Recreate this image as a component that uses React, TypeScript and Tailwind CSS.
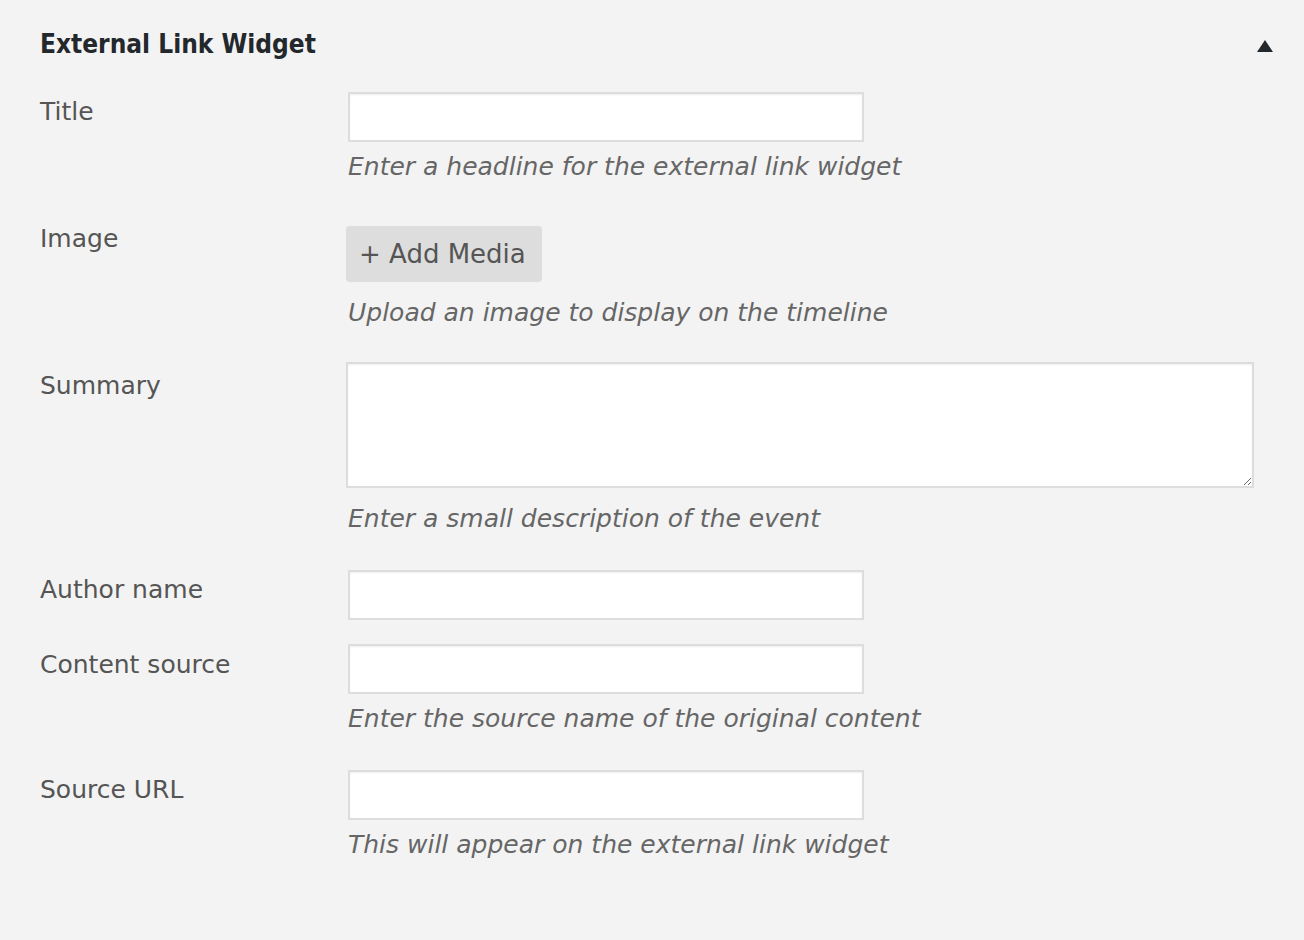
const font = { fontFamily: '"DejaVu Sans", "Noto Sans", sans-serif' };

const inputClassName =
  "ml-[2px] block h-[50px] w-[516px] border-2 border-[#dddddd] bg-white shadow-[inset_0_1px_2px_rgba(0,0,0,0.07)] outline-none";

const helpClassName = "ml-[2px] text-[25px] leading-[36px] italic text-[#666666]";

const labelClassName = "w-[306px] shrink-0 text-[25px] leading-[30px] text-[#555555]";

export default function App() {
  return (
    <div className="min-h-[940px] w-[1304px] bg-[#f3f3f3]" style={font}>
      <div className="flex items-start justify-between pl-[40px] pr-[31px] pt-[26px]">
        <h2
          className="text-[26px] leading-[36px] font-bold text-[#23282d]"
          style={{ fontFamily: '"DejaVu Sans Condensed", "DejaVu Sans", sans-serif' }}
        >
          External Link Widget
        </h2>
        <svg width="16" height="12" viewBox="0 0 16 12" className="mt-[14px]">
          <path d="M8 0 L16 12 L0 12 Z" fill="#23282d" />
        </svg>
      </div>

      <div className="pl-[40px] pr-[50px]">
        {/* Title */}
        <div className="mt-[30px] flex">
          <label className={`${labelClassName} pt-[5px]`}>Title</label>
          <div>
            <input type="text" className={inputClassName} />
            <p className={`${helpClassName} mt-[7px]`}>Enter a headline for the external link widget</p>
          </div>
        </div>

        {/* Image */}
        <div className="mt-[41px] flex">
          <label className={`${labelClassName} -mt-[2px]`}>Image</label>
          <div>
            <button
              type="button"
              className="h-[56px] w-[196px] rounded-[4px] bg-[#dddddd] text-left pl-[13px] text-[26px] text-[#555555]"
            >
              + Add Media
            </button>
            <p className={`${helpClassName} mt-[13px]`}>Upload an image to display on the timeline</p>
          </div>
        </div>

        {/* Summary */}
        <div className="mt-[31px] flex">
          <label className={`${labelClassName} pt-[9px]`}>Summary</label>
          <div className="flex-1">
            <textarea className="block h-[126px] w-[908px] border-2 border-[#dddddd] bg-white shadow-[inset_0_1px_2px_rgba(0,0,0,0.07)] outline-none" />
            <p className={`${helpClassName} mt-[13px]`}>Enter a small description of the event</p>
          </div>
        </div>

        {/* Author name */}
        <div className="mt-[33px] flex">
          <label className={`${labelClassName} pt-[5px]`}>Author name</label>
          <div>
            <input type="text" className={inputClassName} />
          </div>
        </div>

        {/* Content source */}
        <div className="mt-[24px] flex">
          <label className={`${labelClassName} pt-[6px]`}>Content source</label>
          <div>
            <input type="text" className={inputClassName} />
            <p className={`${helpClassName} mt-[7px]`}>Enter the source name of the original content</p>
          </div>
        </div>

        {/* Source URL */}
        <div className="mt-[33px] flex">
          <label className={`${labelClassName} pt-[5px]`}>Source URL</label>
          <div>
            <input type="text" className={inputClassName} />
            <p className={`${helpClassName} mt-[7px]`}>This will appear on the external link widget</p>
          </div>
        </div>
      </div>
    </div>
  );
}
